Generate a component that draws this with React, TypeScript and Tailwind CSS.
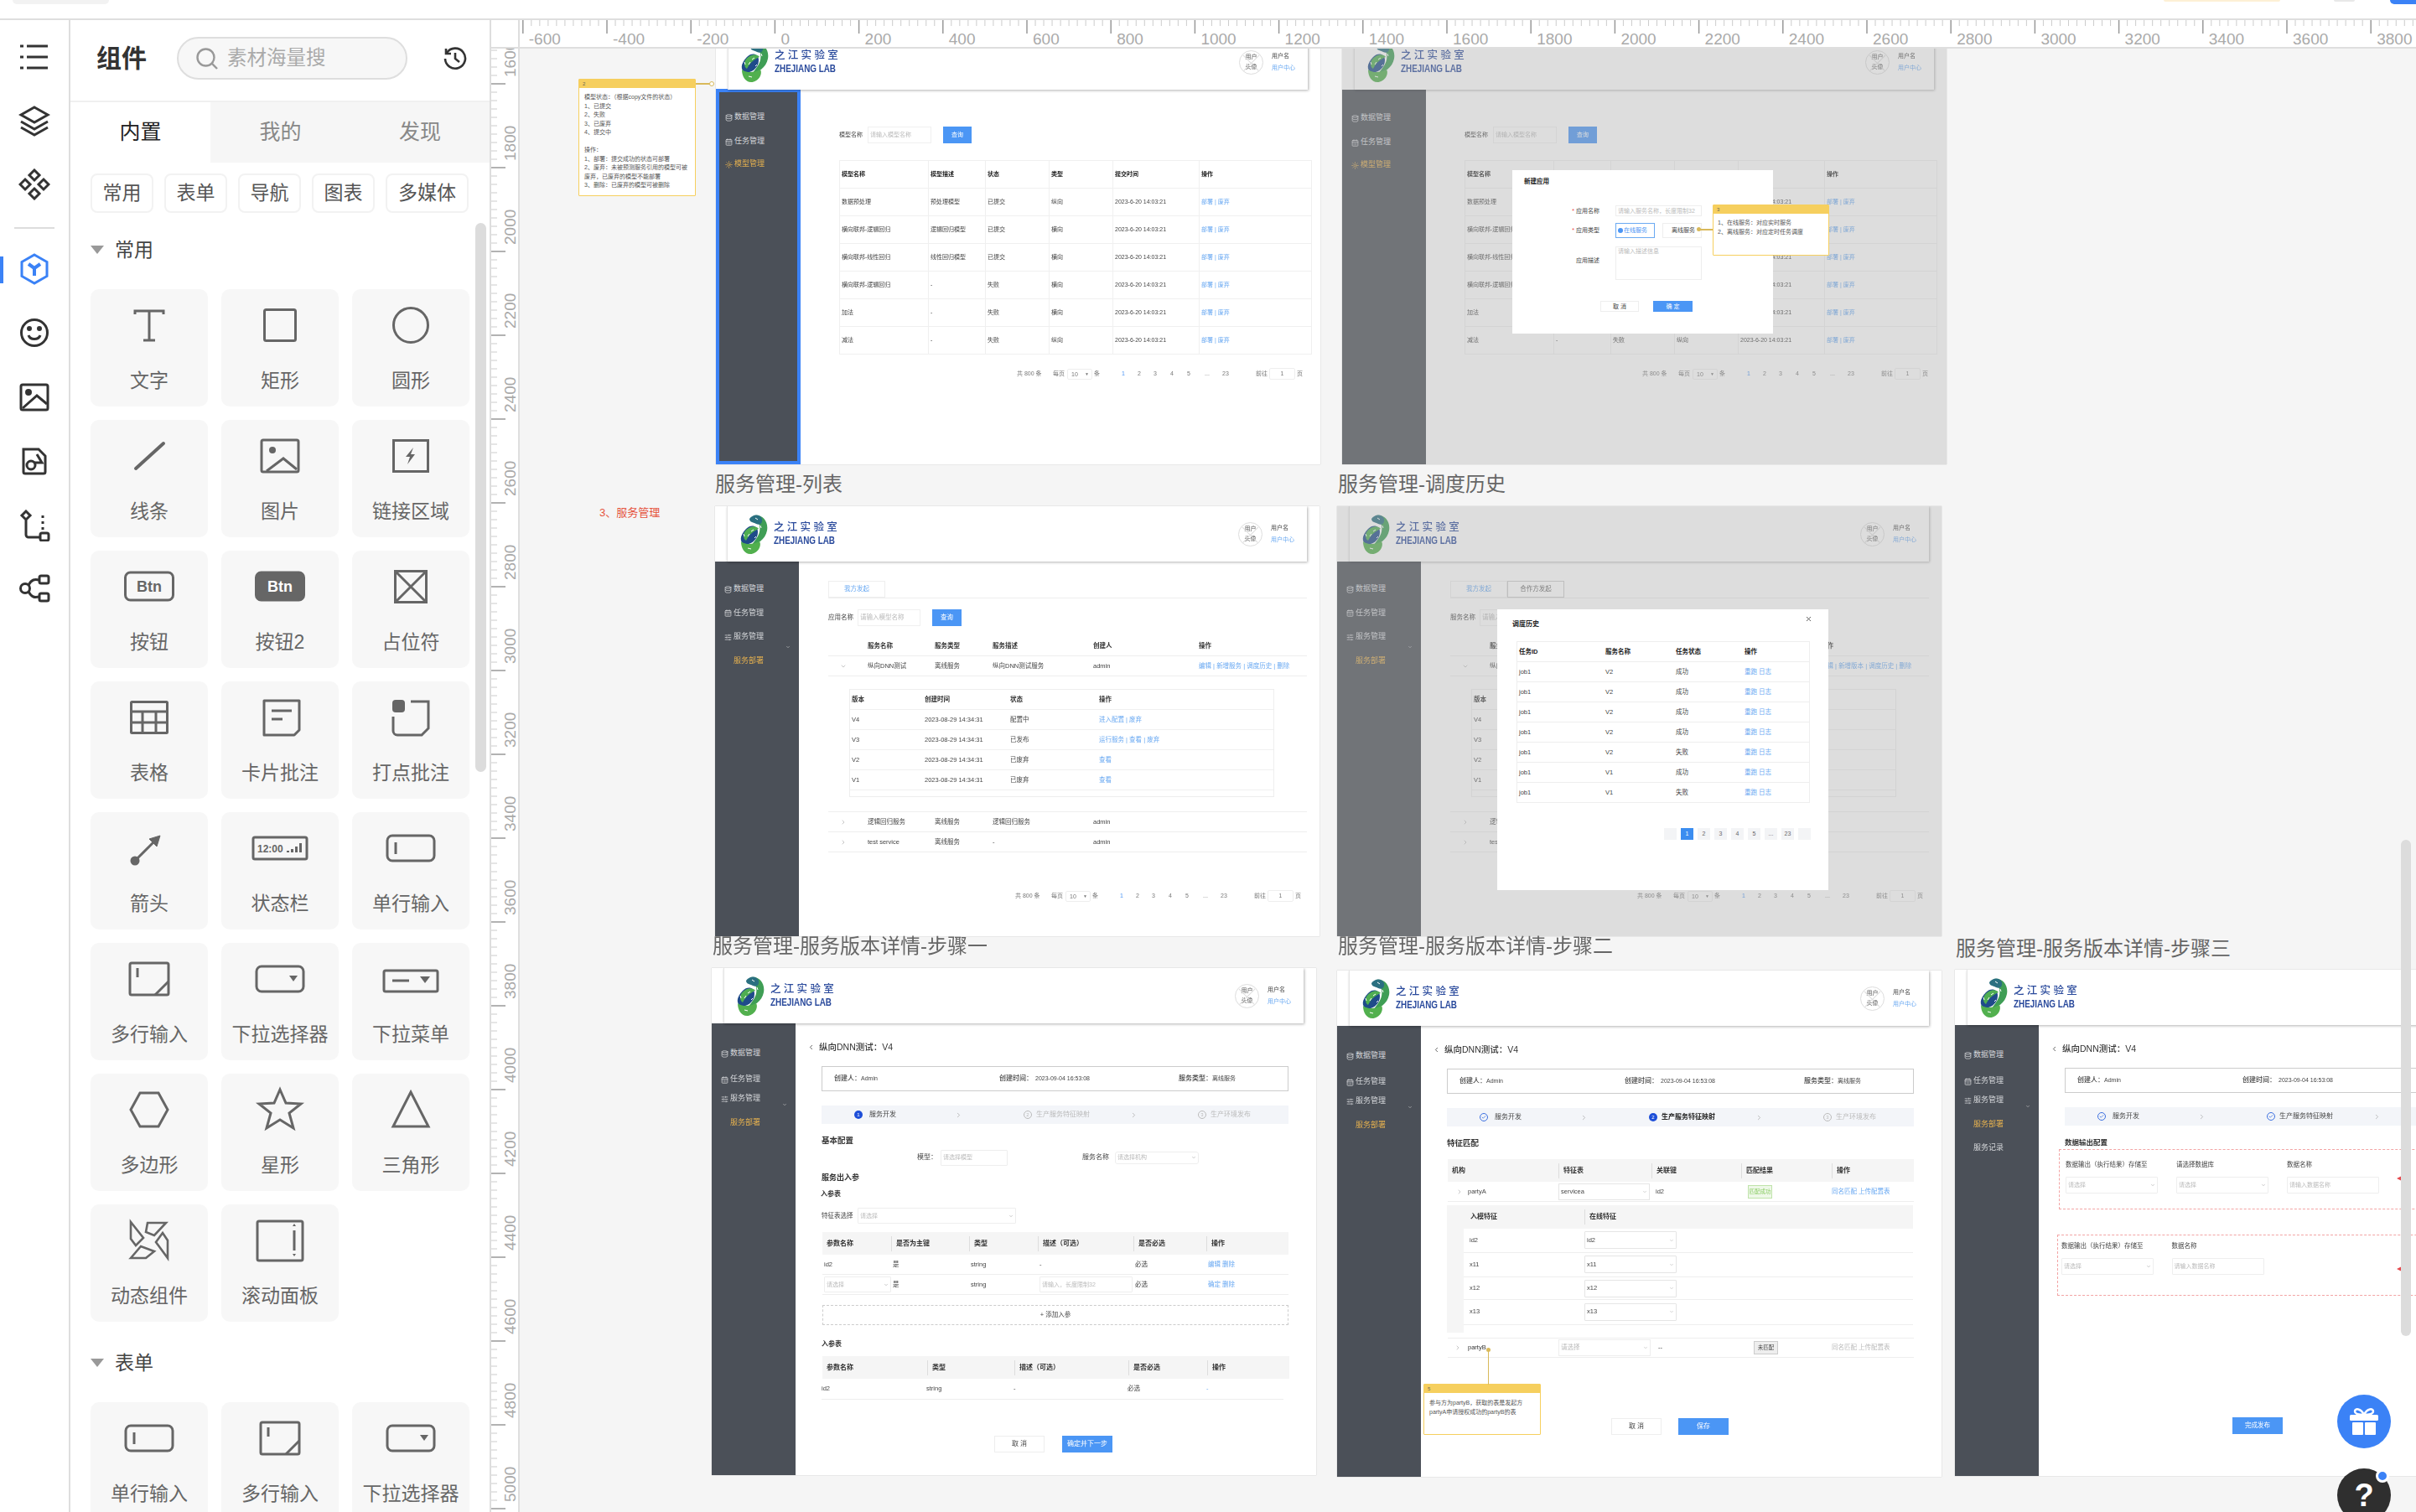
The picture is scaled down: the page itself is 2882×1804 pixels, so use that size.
import React from 'react';
import { Database, CalendarDays, SlidersHorizontal, Sun, ChevronDown, ChevronRight, ChevronLeft, Check, X } from 'lucide-react';

const S = { stroke: '#666', fill: 'none', strokeWidth: 3 } as const;

const btnIcon = (filled: boolean) => (
  <>
    <rect x="1.5" y="11" width="57" height="33" rx="6" stroke="#666" strokeWidth="3" fill={filled ? '#666' : 'none'} />
    <text x="30" y="33.5" textAnchor="middle" fontSize="18" fontWeight="700" fontFamily="Liberation Sans" fill={filled ? '#fff' : '#666'}>Btn</text>
  </>
);
const inputIcon = (
  <>
    <rect x="2" y="13" width="56" height="30" rx="6" {...S} />
    <path d="M12 21v14" {...S} />
  </>
);
const multiIcon = (
  <>
    <rect x="7" y="9" width="46" height="38" rx="2" {...S} />
    <path d="M16 15v11" {...S} />
    <path d="M37 47l16-16" {...S} />
  </>
);
const selectIcon = (
  <>
    <rect x="2" y="13" width="56" height="30" rx="6" {...S} />
    <path d="M41 24h10l-5 7z" fill="#666" />
  </>
);

const commonCards: [string, React.ReactNode][] = [
  ['文字', <path d="M13 15v-4h34v4M30 11v35M23 46h14" {...S} />],
  ['矩形', <rect x="11.5" y="9.5" width="37" height="37" rx="2" {...S} />],
  ['圆形', <circle cx="30" cy="28" r="20.5" {...S} />],
  ['线条', <path d="M14 43L47 13" {...S} strokeWidth="4" strokeLinecap="round" />],
  ['图片', <><rect x="8" y="9" width="44" height="38" rx="2" {...S} /><circle cx="21" cy="21" r="4" fill="#666" /><path d="M14 46l20-15 16 13" {...S} /></>],
  ['链接区域', <><rect x="9.5" y="9.5" width="41" height="37" {...S} /><path d="M33 18l-9 11h5l-3 9 9-12h-5z" fill="#666" /></>],
  ['按钮', btnIcon(false)],
  ['按钮2', btnIcon(true)],
  ['占位符', <><rect x="11.5" y="9.5" width="37" height="37" {...S} /><path d="M11.5 9.5l37 37M48.5 9.5l-37 37" {...S} /></>],
  ['表格', <><rect x="8.5" y="9.5" width="43" height="37" rx="1" {...S} /><path d="M8 21h44M8 34h44M22 21v25M38 21v25" {...S} /></>],
  ['卡片批注', <><path d="M11 8h42v35l-6 6H11z" {...S} strokeLinejoin="round" /><path d="M20 20h24M20 30h13" {...S} /></>],
  ['打点批注', <><rect x="8" y="7" width="15" height="15" rx="4" fill="#666" /><path d="M30 9h21v32l-8 8H14a5 5 0 0 1-5-5V27" {...S} /></>],
  ['箭头', <><circle cx="13" cy="43" r="5.5" fill="#666" /><path d="M13 43l25-25" {...S} /><path d="M43 13L30 17l9 9z" fill="#666" stroke="#666" /></>],
  ['状态栏', <><rect x="-2" y="15" width="64" height="26" rx="2" {...S} /><text x="3" y="33" fontSize="12" fontWeight="700" fontFamily="Liberation Sans" fill="#666">12:00</text><path d="M38 31h3v2h-3zM43 29h3v4h-3zM48 26h3v7h-3zM53 22h3v11h-3z" fill="#666" /></>],
  ['单行输入', inputIcon],
  ['多行输入', multiIcon],
  ['下拉选择器', selectIcon],
  ['下拉菜单', <><rect x="-2" y="18" width="64" height="25" rx="2" {...S} /><path d="M8 30h20" {...S} /><path d="M41 25h12l-6 8z" fill="#666" /></>],
  ['多边形', <path d="M19 8h22l11 20-11 20H19L8 28z" {...S} />],
  ['星形', <path d="M30 4l7 16 18 1-14 11 5 18-16-10-16 10 5-18L5 21l18-1z" {...S} />],
  ['三角形', <path d="M30 7l21 41H9z" {...S} />],
  ['动态组件', <><path d="M28 7h22L36 22l-10-4zM38 30l8-11 6 9v21zM8 49l12-14 16 6-10 8zM8 6l15 19-9 9-6-8z" {...S} strokeWidth="2.6" /></>],
  ['滚动面板', <><rect x="3" y="5" width="54" height="47" rx="2" {...S} /><path d="M47 16v24" {...S} /><path d="M45 11h4l-2-3zM45 44h4l-2 3z" fill="#666" /></>],
];

const formCards: [string, React.ReactNode][] = [
  ['单行输入', inputIcon],
  ['多行输入', multiIcon],
  ['下拉选择器', selectIcon],
];

function Card({ label, icon }: { label: string; icon: React.ReactNode }) {
  return (
    <div className="h-[140px] rounded-[10px] bg-[#f7f7f7] pt-[15px] flex flex-col items-center">
      <svg width="60" height="56" viewBox="0 0 60 56" className="overflow-visible">{icon}</svg>
      <div className="mt-[22px] text-[23px] leading-[32px] text-[#666] whitespace-nowrap">{label}</div>
    </div>
  );
}

function Section({ title, className }: { title: string; className: string }) {
  return (
    <div className={`flex items-center h-[32px] ${className}`}>
      <span className="w-0 h-0 border-x-[8px] border-x-transparent border-t-[10px] border-t-[#999]" />
      <span className="ml-[13px] text-[23px] text-[#444]">{title}</span>
    </div>
  );
}

function RailIcon({ children, className = '' }: { children: React.ReactNode; className?: string }) {
  return (
    <svg width="38" height="38" viewBox="0 0 38 38" fill="none" stroke="#333" strokeWidth="3" className={className}>{children}</svg>
  );
}

function Rail() {
  return (
    <div className="w-[84px] border-r-2 border-[#dedede] flex flex-col items-center pt-[25px] relative">
      <RailIcon><path d="M10 6h25M10 19h25M10 32h25" /><path d="M2 6h4M2 19h4M2 32h4" /></RailIcon>
      <RailIcon className="mt-[38px]"><path d="M19 3l16 9-16 9-16-9z" /><path d="M3 20l16 9 16-9M3 27l16 9 16-9" /></RailIcon>
      <RailIcon className="mt-[38px]"><path d="M19 2l6 6-6 6-6-6zM8 13l6 6-6 6-6-6zM30 13l6 6-6 6-6-6zM19 24l6 6-6 6-6-6z" /></RailIcon>
      <div className="w-[48px] h-[2px] bg-[#ddd] mt-[32px]" />
      <RailIcon className="mt-[29px]"><g stroke="#3b82f6"><path d="M19 2l15 8.5v17L19 36 4 27.5v-17z" /><path d="M12 13l7 5 7-5M19 18v9" strokeWidth="4" /></g></RailIcon>
      <RailIcon className="mt-[38px]"><circle cx="19" cy="19" r="15.5" /><path d="M12 22c2 6 12 6 14 0" /><circle cx="13" cy="14" r="1.5" fill="#333" /><circle cx="25" cy="14" r="1.5" fill="#333" /></RailIcon>
      <RailIcon className="mt-[39px]"><rect x="3" y="4" width="32" height="30" rx="2" /><circle cx="12" cy="13" r="2.5" fill="#333" /><path d="M5 32l17-15 12 10" /></RailIcon>
      <RailIcon className="mt-[38px]"><path d="M6 5h18l8 8v19a2 2 0 0 1-2 2H8a2 2 0 0 1-2-2z" /><circle cx="15" cy="24" r="5" /><path d="M22 11l6 10h-9" /></RailIcon>
      <RailIcon className="mt-[39px]"><path d="M9 2l5 5-5 5-5-5zM9 12v18a3 3 0 0 0 3 3h14M29 7v3M29 14v3M29 21v3" /><rect x="26" y="28" width="10" height="9" rx="2" /></RailIcon>
      <RailIcon className="mt-[37px]"><circle cx="8" cy="19" r="5.5" /><rect x="25" y="4" width="11" height="9" rx="2" /><rect x="25" y="25" width="11" height="9" rx="2" /><path d="M12 15c4-7 7-7 13-6M12 23c4 7 7 7 13 6" /></RailIcon>
      <div className="absolute left-0 top-[282px] w-[4px] h-[32px] bg-[#3b82f6]" />
    </div>
  );
}

function Panel() {
  return (
    <div className="w-[502px] border-r-2 border-[#dedede] relative overflow-hidden">
      <div className="h-[98px] border-b-2 border-[#f0f0f0] flex items-center pl-[31px] pb-[5px]">
        <span className="w-[65px] text-[30px] font-bold text-[#333] leading-none">组件</span>
        <div className="ml-[31px] w-[275px] h-[51px] rounded-full border-2 border-[#dedede] bg-[#f7f7f7] flex items-center pl-[21px]">
          <svg width="26" height="26" viewBox="0 0 26 26" fill="none" stroke="#999" strokeWidth="2.4"><circle cx="11.5" cy="11.5" r="10" /><path d="M19 19l6 6" /></svg>
          <span className="ml-[11px] text-[23.5px] text-[#aaa]">素材海量搜</span>
        </div>
        <svg width="28" height="28" viewBox="0 0 28 28" fill="none" stroke="#333" strokeWidth="2.6" className="ml-[43px]"><path d="M4 7a12 12 0 1 1-2 7" /><path d="M3 2v6h6" /><path d="M14 7v7l5 4" /></svg>
      </div>
      <div className="flex h-[72px] text-[25px]">
        <div className="w-[167px] flex items-center justify-center text-[#222]">内置</div>
        <div className="w-[167px] flex items-center justify-center bg-[#f6f6f6] text-[#888]">我的</div>
        <div className="w-[166px] flex items-center justify-center bg-[#f6f6f6] text-[#888]">发现</div>
      </div>
      <div className="flex gap-[13px] pl-[24px] mt-[13px]">
        {['常用', '表单', '导航', '图表', '多媒体'].map((c, i) => (
          <div key={c} className={`h-[47px] ${i === 4 ? 'w-[99px]' : 'w-[75px]'} rounded-[8px] border-2 border-[#f2f2f2] flex items-center justify-center text-[23px] text-[#555]`}>{c}</div>
        ))}
      </div>
      <div className="pl-[24px] w-[476px]">
        <Section title="常用" className="mt-[28px]" />
        <div className="grid grid-cols-[140px_140px_140px] gap-[16px] mt-[31px]">
          {commonCards.map(([l, ic]) => <Card key={l} label={l} icon={ic} />)}
        </div>
        <Section title="表单" className="mt-[33px]" />
        <div className="grid grid-cols-[140px_140px_140px] gap-[16px] mt-[31px]">
          {formCards.map(([l, ic]) => <Card key={l} label={l} icon={ic} />)}
        </div>
      </div>
      <div className="absolute left-[483px] top-[242px] w-[13px] h-[655px] rounded-full bg-[#dcdcdc]" />
    </div>
  );
}

function TopRuler() {
  const ticks = Array.from({ length: 226 }, (_, i) => i - 30);
  return (
    <div className="h-[34px] border-b-2 border-[#dedede] flex">
      <div className="w-[34px] border-r-2 border-[#dedede]" />
      <svg width="2262" height="32" fontFamily="Liberation Sans" fontSize="19" fill="#aaa">
        {ticks.map(i => {
          const x = 304.4 + i * 10.02;
          const major = i % 10 === 0;
          return (
            <g key={i}>
              <line x1={x} x2={x} y1="0" y2={major ? 16 : 7} stroke={major ? '#999' : '#ccc'} strokeWidth={major ? 1.5 : 1} />
              {major && <text x={x + 7} y="29" stroke="none">{i * 20}</text>}
            </g>
          );
        })}
      </svg>
    </div>
  );
}

function LeftRuler() {
  const ticks = Array.from({ length: 190 }, (_, i) => i);
  return (
    <div className="w-[34px] border-r-2 border-[#dedede] overflow-hidden">
      <svg width="32" height="1746" fontFamily="Liberation Sans" fontSize="19" fill="#aaa">
        {ticks.map(i => {
          const y = -58 + i * 10;
          const major = i % 10 === 0;
          return (
            <g key={i}>
              <line x1="0" x2={major ? 17 : 7} y1={y} y2={y} stroke={major ? '#999' : '#ccc'} strokeWidth={major ? 1.5 : 1} />
              {major && <text transform={`translate(29 ${y - 8}) rotate(-90)`} stroke="none">{1400 + i * 20}</text>}
            </g>
          );
        })}
      </svg>
    </div>
  );
}

function Logo() {
  return (
    <svg width="34" height="49" viewBox="0 0 34 49" className="shrink-0">
      <path d="M8 18C14 12 22 14 22 22C22 30 14 38 6 36C0 34 0 26 8 18Z" fill="#1f4b8a" />
      <path d="M18 2C27 0 35 9 33 20C31 31 21 36 14 38C20 30 26 24 24 14C23 9 20 6 14 7C14 4 16 3 18 2Z" fill="#3f9e55" />
      <path d="M12 6C16 0 25 0 27 6C28 12 24 14 20 12C16 10 12 10 12 6Z" fill="#2a6f80" />
      <path d="M6 22C12 14 20 14 23 18C18 20 12 24 8 32C5 30 4 26 6 22Z" fill="#4fae52" />
      <path d="M2 33C8 38 18 36 24 33C27 38 22 48 13 48C6 48 2 41 2 33Z" fill="#52b04e" />
      <path d="M19 5l3 2M25 14l1 3M14 21l3-2M10 27l2-3M18 29l2-2M10 41l4 1M5 24l1 3" stroke="#fff" strokeWidth="1" />
    </svg>
  );
}

function Header() {
  return (
    <div className="h-[66px] pl-[14px] pr-[15px] shrink-0 relative z-10">
      <div className="h-full border-l border-[#e5e5e5] shadow-[1px_1px_3px_rgba(0,0,0,0.3)] bg-white flex items-center pl-[14px] pr-[13px]">
        <Logo />
        <div className="ml-[7px] w-[76px]">
          <div className="text-[12.5px] leading-[15px] font-medium tracking-[3.3px] text-[#2a4a9c] whitespace-nowrap">之江实验室</div>
          <div className="text-[13px] leading-[15px] font-bold scale-x-[0.76] origin-left text-[#2a4a9c] whitespace-nowrap font-['Liberation_Sans']">ZHEJIANG LAB</div>
        </div>
        <div className="ml-auto w-[29px] h-[29px] rounded-full border border-[#ddd] relative flex flex-col items-center justify-center text-[7px] leading-[12px] text-[#555] overflow-hidden">
          <span>用户</span><span>头像</span>
          <div className="absolute left-0 right-0 top-[14px] h-px bg-[#ddd] rotate-45" />
          <div className="absolute left-0 right-0 top-[14px] h-px bg-[#ddd] -rotate-45" />
        </div>
        <div className="ml-[10px] w-[30px] text-[7px] leading-[14px]">
          <div className="text-[#444]">用户名</div>
          <div className="text-[#6aa9f2]">用户中心</div>
        </div>
      </div>
    </div>
  );
}

function SideItem({ icon, label, tone = 'plain', className = '' }: { icon?: React.ReactNode; label: string; tone?: 'plain' | 'active'; className?: string }) {
  return (
    <div className={`h-[16px] flex items-center pl-[11px] text-[9px] ${tone === 'active' ? 'text-[#e4b04f]' : 'text-[#d5d7da]'} ${className}`}>
      <span className="w-[11px] shrink-0">{icon}</span>
      <span>{label}</span>
    </div>
  );
}

const dataIcon = <Database size={9} />;
const taskIcon = <CalendarDays size={9} />;
const serviceIcon = <SlidersHorizontal size={9} />;

// 列表页的侧栏间距均匀，详情页的间距不一样
function ServiceSide({ record = false, even = false }: { record?: boolean; even?: boolean }) {
  return (
    <div className={`w-[100px] shrink-0 bg-[#4b5058] ${even ? 'pt-[25px]' : 'pt-[28px]'}`}>
      <SideItem icon={dataIcon} label="数据管理" />
      <SideItem icon={taskIcon} label="任务管理" className={even ? 'mt-[12.5px]' : 'mt-[15px]'} />
      <div className="relative">
        <SideItem icon={serviceIcon} label="服务管理" className={even ? 'mt-[12.5px]' : 'mt-[7px]'} />
        <ChevronDown size={6} className={`absolute left-[84px] ${even ? 'top-[17px]' : 'top-[12px]'} text-[#ddd]`} />
      </div>
      <SideItem label="服务部署" tone="active" className={even ? 'mt-[12.5px]' : 'mt-[13px]'} />
      {record && <SideItem label="服务记录" className="mt-[12px]" />}
    </div>
  );
}

function ListSide({ selected = false }: { selected?: boolean }) {
  const shift = selected ? '-ml-[4px]' : '';
  return (
    <div className={`${selected ? 'w-[101px] border-[4px] border-[#3b82f6] -mt-px pt-[22px]' : 'w-[100px] pt-[26px]'} shrink-0 bg-[#4b5058]`}>
      <SideItem icon={dataIcon} label="数据管理" className={shift} />
      <SideItem icon={taskIcon} label="任务管理" className={`mt-[13px] ${shift}`} />
      <SideItem icon={<Sun size={9} />} label="模型管理" tone="active" className={`mt-[11px] ${shift}`} />
    </div>
  );
}

function Pagination({ className }: { className: string }) {
  return (
    <div className={`flex items-center h-[14px] text-[7px] text-[#777] whitespace-nowrap ${className}`}>
      <span className="w-[43px]">共 800 条</span>
      <span className="w-[17px]">每页</span>
      <span className="w-[30px] h-[13px] border border-[#eee] rounded-[2px] pl-[4px] leading-[11px] flex justify-between pr-[3px]">10<span className="text-[5px]">▼</span></span>
      <span className="ml-[2px] w-[33px]">条</span>
      <span className="w-[19px] text-[#4b96f5]">1</span>
      <span className="w-[19px]">2</span>
      <span className="w-[20px]">3</span>
      <span className="w-[20px]">4</span>
      <span className="w-[21px]">5</span>
      <span className="w-[21px]">...</span>
      <span className="w-[40px]">23</span>
      <span className="w-[16px]">前往</span>
      <span className="w-[31px] h-[14px] border border-[#eee] rounded-[2px] text-center leading-[12px]">1</span>
      <span className="ml-[2px]">页</span>
    </div>
  );
}

const TIME = '2023-6-20 14:03:21';
const modelRows = [
  ['数据预处理', '预处理模型', '已提交', '纵向'],
  ['横向联邦-逻辑回归', '逻辑回归模型', '已提交', '横向'],
  ['横向联邦-线性回归', '线性回归模型', '已提交', '横向'],
  ['横向联邦-逻辑回归', '-', '失败', '横向'],
  ['加法', '-', '失败', '横向'],
  ['减法', '-', '失败', '纵向'],
];

function ModelList() {
  const cell = 'border-r border-b border-[#f0f0f0] pl-[2px] flex items-center';
  return (
    <div className="flex-1 pl-[46px] pr-[13px] pt-[44px] text-[7px] leading-[10px] text-[#444]">
      <div className="flex items-center h-[20px]">
        <span className="w-[34px]">模型名称</span>
        <div className="w-[76px] h-[20px] border border-[#f0f0f0] pl-[2px] leading-[18px] text-[#bbb]">请输入模型名称</div>
        <div className="ml-[14px] w-[34px] h-[20px] bg-[#4b96f5] text-white text-center leading-[20px]">查询</div>
      </div>
      <div className="mt-[20px] grid grid-cols-[106px_68px_76px_76px_103px_134px] auto-rows-[33px] border-t border-l border-[#f0f0f0]">
        {['模型名称', '模型描述', '状态', '类型', '提交时间', '操作'].map(h => (
          <div key={h} className={`${cell} font-bold text-[#222]`}>{h}</div>
        ))}
        {modelRows.map((r, i) => (
          <React.Fragment key={i}>
            {r.map((c, j) => <div key={j} className={cell}>{c}</div>)}
            <div className={cell}>{TIME}</div>
            <div className={`${cell} text-[#6aa9f2]`}>部署 | 废弃</div>
          </React.Fragment>
        ))}
      </div>
      <Pagination className="mt-[16px] ml-[212px]" />
    </div>
  );
}

function Frame({ className, children }: { className: string; children: React.ReactNode }) {
  return (
    <div className={`absolute w-[721px] bg-white flex flex-col overflow-hidden shadow-[0_0_1px_rgba(0,0,0,0.3)] blur-[0.35px] ${className}`}>
      <Header />
      <div className="flex flex-1 min-h-0">{children}</div>
    </div>
  );
}

const Dim = () => <div className="absolute inset-0 bg-[#aaaaaa]/40 z-20" />;

function NewAppModal() {
  const label = 'w-[104px] text-right';
  return (
    <div className="absolute left-[203px] top-[162px] w-[311px] h-[195px] bg-white z-30 pt-[9px] text-[7px] leading-[10px] text-[#444]">
      <div className="pl-[14px] h-[10px] font-bold text-[7.5px] text-[#222]">新建应用</div>
      <div className="flex items-center mt-[23px] h-[13px]">
        <span className={label}><span className="text-[#e44]">* </span>应用名称</span>
        <span className="ml-[19px] w-[103px] h-[13px] border border-[#eee] pl-[2px] leading-[11px] text-[#bbb] whitespace-nowrap overflow-hidden">请输入服务名称，长度限制32</span>
      </div>
      <div className="flex items-center mt-[8px] h-[18px]">
        <span className={label}><span className="text-[#e44]">* </span>应用类型</span>
        <span className="ml-[19px] w-[47px] h-[18px] border border-[#6aa9f2] text-[#4b96f5] flex items-center pl-[2px]"><span className="w-[6px] h-[6px] rounded-full bg-[#4b96f5] mr-[1px]" />在线服务</span>
        <span className="ml-[9px] w-[47px] h-[18px] border border-[#eee] flex items-center pl-[10px]">离线服务</span>
      </div>
      <div className="flex mt-[10px] h-[40px]">
        <span className={`${label} mt-[12px]`}>应用描述</span>
        <span className="ml-[19px] w-[103px] h-[40px] border border-[#eee] pl-[2px] text-[#bbb]">请输入描述信息</span>
      </div>
      <div className="flex mt-[25px] h-[13px] ml-[105px]">
        <span className="w-[46px] border border-[#eee] text-center leading-[11px]">取 消</span>
        <span className="ml-[17px] w-[47px] bg-[#4b96f5] text-white text-center leading-[13px]">确 定</span>
      </div>
    </div>
  );
}

function Note({ className, no, children }: { className: string; no: string; children: React.ReactNode }) {
  return (
    <div className={`absolute border border-[#f6cf5e] bg-white rounded-[1px] text-[7px] leading-[10.5px] text-[#555] z-30 ${className}`}>
      <div className="h-[10px] bg-[#f6cf5e] pl-[4px] text-[6px] leading-[10px] text-[#665]">{no}</div>
      {children}
    </div>
  );
}

const versionRows = [
  ['V4', '配置中', '进入配置 | 废弃'],
  ['V3', '已发布', '运行服务 | 查看 | 废弃'],
  ['V2', '已废弃', '查看'],
  ['V1', '已废弃', '查看'],
];
const serviceRows = [
  ['逻辑回归服务', '离线服务', '逻辑回归服务', 'admin'],
  ['test service', '离线服务', '-', 'admin'],
];

function ServiceList({ both = false }: { both?: boolean }) {
  const cols = 'grid grid-cols-[47px_80px_69px_120px_126px_129px] items-center';
  const sub = 'grid grid-cols-[87px_102px_106px_211px] items-center h-[24px] border-b border-[#f0f0f0] pl-[2px]';
  return (
    <div className="flex-1 pl-[35px] pr-[15px] pt-[23px] text-[7.5px] leading-[10px] text-[#444]">
      <div className="flex h-[21px] border-b border-[#eee]">
        <div className="w-[68px] h-[20px] border border-[#eee] text-center leading-[18px] text-[#6aa9f2]">我方发起</div>
        {both && <div className="w-[68px] h-[20px] border border-[#ccc] text-center leading-[18px] text-[#666]">合作方发起</div>}
      </div>
      <div className="flex items-center mt-[13px] h-[20px]">
        <span className="w-[35px]">{both ? '服务名称' : '应用名称'}</span>
        <div className="w-[75px] h-[20px] border border-[#f0f0f0] pl-[2px] leading-[18px] text-[#bbb]">请输入模型名称</div>
        <div className="ml-[14px] w-[35px] h-[20px] bg-[#4b96f5] text-white text-center leading-[20px]">查询</div>
      </div>
      <div className={`${cols} mt-[12px] h-[24px] border-b border-[#eee] font-bold text-[#333]`}>
        <span />
        <span>服务名称</span><span>服务类型</span><span>服务描述</span><span>创建人</span><span>操作</span>
      </div>
      <div className={`${cols} h-[24px] border-b border-[#eee]`}>
        <ChevronDown size={8} className="ml-[14px] text-[#aaa]" />
        <span>纵向DNN测试</span><span>离线服务</span><span>纵向DNN测试服务</span><span>admin</span>
        <span className="text-[#6aa9f2] whitespace-nowrap">编辑 | {both ? '新增版本' : '新增服务'} | 调度历史 | 删除</span>
      </div>
      <div className="mt-[15px] ml-[25px] w-[507px] h-[129px] border border-[#eee]">
        <div className={`${sub} font-bold text-[#333]`}><span>版本</span><span>创建时间</span><span>状态</span><span>操作</span></div>
        {versionRows.map(r => (
          <div key={r[0]} className={sub}>
            <span>{r[0]}</span><span>2023-08-29 14:34:31</span><span>{r[1]}</span><span className="text-[#6aa9f2]">{r[2]}</span>
          </div>
        ))}
      </div>
      <div className="mt-[17px] border-t border-[#eee]">
        {serviceRows.map(r => (
          <div key={r[0]} className={`${cols} h-[24px] border-b border-[#eee]`}>
            <ChevronRight size={8} className="ml-[14px] text-[#aaa]" />
            {r.map((c, j) => <span key={j}>{c}</span>)}
          </div>
        ))}
      </div>
      <Pagination className="mt-[45px] ml-[223px]" />
    </div>
  );
}

const jobRows = [
  ['V2', '成功'], ['V2', '成功'], ['V2', '成功'], ['V2', '成功'], ['V2', '失败'], ['V1', '成功'], ['V1', '失败'],
];

function HistoryModal() {
  const row = 'grid grid-cols-[103px_84px_82px_80px] h-[24px] items-center border-b border-[#eee] pl-[2px]';
  return (
    <div className="absolute left-[191px] top-[123px] w-[395px] h-[335px] bg-white z-30 text-[7.5px] leading-[10px] text-[#444]">
      <div className="absolute left-[367px] top-[7px]"><X size={9} className="text-[#333]" /></div>
      <div className="pl-[18px] pt-[13px] h-[38px] font-bold text-[#222] text-[8px]">调度历史</div>
      <div className="ml-[23px] w-[350px] border-t border-x border-[#eee]">
        <div className={`${row} font-bold text-[#222]`}><span>任务ID</span><span>服务名称</span><span>任务状态</span><span>操作</span></div>
        {jobRows.map((r, i) => (
          <div key={i} className={row}>
            <span>job1</span><span>{r[0]}</span><span>{r[1]}</span><span className="text-[#6aa9f2]">重跑 日志</span>
          </div>
        ))}
      </div>
      <div className="flex gap-[5px] ml-[199px] mt-[30px] text-[7px]">
        {['', '1', '2', '3', '4', '5', '...', '23', ''].map((p, i) => (
          <span key={i} className={`w-[15px] h-[14px] text-center leading-[14px] ${p === '1' ? 'bg-[#3b8df0] text-white' : 'bg-[#f3f4f6] text-[#666]'}`}>{p}</span>
        ))}
      </div>
    </div>
  );
}

function StepMark({ state, n }: { state: 'done' | 'now' | 'todo'; n: string }) {
  if (state === 'done') return <span className="w-[10px] h-[10px] rounded-full border border-[#3b6fe0] flex items-center justify-center text-[#3b6fe0]"><Check size={6} strokeWidth={3} /></span>;
  if (state === 'now') return <span className="w-[10px] h-[10px] rounded-full bg-[#1d4ed8] text-white flex items-center justify-center text-[6px]">{n}</span>;
  return <span className="w-[10px] h-[10px] rounded-full border border-[#bbb] text-[#bbb] flex items-center justify-center text-[6px]">{n}</span>;
}

function VersionTop({ step }: { step: 1 | 2 | 3 }) {
  const tone = (i: number) => (i === step ? (i === 2 ? 'text-[#222] font-bold' : 'text-[#444]') : i < step ? 'text-[#444]' : 'text-[#bbb]');
  const mark = (i: number) => (i < step ? 'done' : i === step ? 'now' : 'todo');
  return (
    <>
      <div className="flex items-center h-[14px] mt-[21px] -ml-[17px] text-[10.5px] text-[#333]">
        <ChevronLeft size={9} />
        <span className="ml-[5px] font-medium">纵向DNN测试：V4</span>
      </div>
      <div className="mt-[16px] h-[30px] w-[557px] border border-[#ccc] flex items-center text-[8px] text-[#444]">
        <span className="ml-[14px] w-[197px]"><b className="font-medium">创建人：</b><span className="text-[7px]">Admin</span></span>
        <span className="w-[214px]"><b className="font-medium">创建时间：</b><span className="ml-[3px] text-[7px]">2023-09-04 16:53:08</span></span>
        <span><b className="font-medium">服务类型：</b><span className="text-[7px]">离线服务</span></span>
      </div>
      <div className="mt-[17px] h-[22px] w-[557px] bg-[#f3f5f9] flex items-center text-[8px] whitespace-nowrap">
        <span className="ml-[39px]"><StepMark state={mark(1)} n="1" /></span>
        <span className={`ml-[8px] w-[102px] ${tone(1)}`}>服务开发</span>
        <ChevronRight size={9} className="text-[#aaa]" />
        <span className="ml-[73px]"><StepMark state={mark(2)} n="2" /></span>
        <span className={`ml-[5px] w-[112px] ${tone(2)}`}>生产服务特征映射</span>
        <ChevronRight size={9} className="text-[#aaa]" />
        <span className="ml-[72px]"><StepMark state={mark(3)} n="3" /></span>
        <span className={`ml-[5px] ${tone(3)}`}>生产环境发布</span>
      </div>
    </>
  );
}

function Field({ className, children, arrow = false }: { className: string; children: React.ReactNode; arrow?: boolean }) {
  return (
    <div className={`border border-[#eee] rounded-[1px] flex items-center justify-between pl-[2px] pr-[2px] text-[#bbb] text-[7px] ${className}`}>
      <span>{children}</span>
      {arrow && <ChevronDown size={6} className="text-[#999]" />}
    </div>
  );
}

function TableHead({ className, labels }: { className: string; labels: string[] }) {
  return (
    <div className={`grid h-[27px] bg-[#f5f5f5] items-center font-bold text-[8px] text-[#333] ${className}`}>
      {labels.map((l, i) => (
        <span key={l} className={`h-[18px] leading-[18px] pl-[5px] ${i > 0 ? 'border-l border-[#ddd]' : ''}`}>{l}</span>
      ))}
    </div>
  );
}

function StepOne() {
  const row1 = 'grid grid-cols-[82px_93px_82px_114px_87px_98px]';
  const row2 = 'grid grid-cols-[125px_104px_136px_94px_98px]';
  return (
    <div className="flex-1 pl-[31px] text-[7.5px] leading-[10px] text-[#444]">
      <VersionTop step={1} />
      <div className="mt-[14px] h-[12px] font-bold text-[9.5px] leading-[12px] text-[#333]">基本配置</div>
      <div className="flex items-center h-[20px] mt-[4px]">
        <span className="ml-[114px] w-[28px] text-[8px]">模型：</span>
        <Field className="w-[80px] h-[19px]">请选择模型</Field>
        <span className="ml-[89px] w-[39px] text-[8px]">服务名称</span>
        <Field arrow className="w-[100px] h-[15px] rounded-[3px]">请选择机构</Field>
      </div>
      <div className="mt-[8px] h-[12px] font-semibold text-[9px] leading-[12px] text-[#333]">服务出入参</div>
      <div className="mt-[9px] h-[10px] font-semibold text-[8px] -ml-[1px] text-[#333]">入参表</div>
      <div className="flex items-center mt-[11px] h-[19px]">
        <span className="w-[43px]">特征表选择</span>
        <Field arrow className="w-[189px] h-[19px]">请选择</Field>
      </div>
      <div className="ml-[1px] w-[556px]">
        <TableHead className={`${row1} mt-[10px]`} labels={['参数名称', '是否为主键', '类型', '描述（可选）', '是否必选', '操作']} />
        <div className={`${row1} h-[24px] items-center border-b border-[#eee] pl-[2px]`}>
          <span>id2</span><span>是</span><span>string</span><span>-</span><span>必选</span><span className="text-[#6aa9f2]">编辑 删除</span>
        </div>
        <div className={`${row1} h-[24px] items-center border-b border-[#eee] pl-[2px]`}>
          <Field arrow className="w-[80px] h-[19px]">请选择</Field><span>是</span><span>string</span>
          <Field className="w-[111px] h-[19px]">请输入，长度限制32</Field><span>必选</span><span className="text-[#6aa9f2]">确定 删除</span>
        </div>
        <div className="mt-[12px] h-[24px] border border-dashed border-[#ccc] text-center leading-[22px]">+ 添加入参</div>
      </div>
      <div className="mt-[18px] h-[10px] font-semibold text-[8px] text-[#333]">入参表</div>
      <TableHead className={`${row2} mt-[9px] ml-[1px] w-[557px]`} labels={['参数名称', '类型', '描述（可选）', '是否必选', '操作']} />
      <div className={`${row2} w-[551px] h-[25px] items-center border-b border-[#eee]`}>
        <span>id2</span><span>string</span><span>-</span><span>必选</span><span className="text-[#6aa9f2]">-</span>
      </div>
      <div className="flex mt-[43px] ml-[206px] h-[20px] text-[8px]">
        <span className="w-[60px] border border-[#eee] text-center leading-[18px]">取 消</span>
        <span className="ml-[21px] w-[60px] bg-[#4b96f5] text-white text-center leading-[20px]">确定并下一步</span>
      </div>
    </div>
  );
}

function SubRow({ name, field, className }: { name: string; field: string; className: string }) {
  return (
    <div className={`ml-[20px] bg-white border-b border-[#eee] flex items-center ${className}`}>
      <span className="pl-[7px] w-[144px]">{name}</span>
      <div className="w-[110px] h-[21px] border border-[#e5e5e5] rounded-[1px] flex items-center justify-between px-[2px]">
        {field}<ChevronDown size={6} className="text-[#aaa]" />
      </div>
    </div>
  );
}

function StepTwo() {
  const cols = 'grid grid-cols-[132px_111px_107px_108px_98px]';
  return (
    <div className="flex-1 pl-[31px] text-[7.5px] leading-[10px] text-[#444]">
      <VersionTop step={2} />
      <div className="mt-[14px] h-[12px] font-bold text-[9.5px] leading-[12px] text-[#333]">特征匹配</div>
      <TableHead className={`${cols} mt-[13px] ml-[1px] w-[556px]`} labels={['机构', '特征表', '关联键', '匹配结果', '操作']} />
      <div className={`${cols} ml-[1px] w-[556px] h-[24px] items-center border-b border-[#eee]`}>
        <span className="flex items-center pl-[10px]"><ChevronRight size={8} className="text-[#aaa]" /><span className="ml-[6px]">partyA</span></span>
        <div className="w-[109px] h-[20px] border border-[#e5e5e5] flex items-center justify-between px-[2px]">servicea<ChevronDown size={6} className="text-[#aaa]" /></div>
        <span className="pl-[5px]">id2</span>
        <span className="ml-[8px] w-[29px] h-[16px] bg-[#eef8e8] border border-[#bfe3aa] text-[#8fce6a] text-center leading-[14px] text-[6.5px]">匹配成功</span>
        <span className="text-[#6aa9f2] whitespace-nowrap">同名匹配 上传配置表</span>
      </div>
      <div className="mt-[4px] w-[556px] h-[152px] bg-[#f5f5f5]">
        <div className="h-[28px] flex items-center font-bold text-[8px] text-[#333]">
          <span className="pl-[28px] w-[164px]">入模特征</span>
          <span className="border-l border-[#ddd] pl-[5px] h-[18px] leading-[18px]">在线特征</span>
        </div>
        <SubRow name="id2" field="id2" className="h-[28.5px]" />
        <SubRow name="x11" field="x11" className="h-[29.5px]" />
        <SubRow name="x12" field="x12" className="h-[27px]" />
        <SubRow name="x13" field="x13" className="h-[29.5px]" />
        <div className="ml-[20px] bg-white h-[9.5px]" />
      </div>
      <div className={`${cols} mt-[5.5px] ml-[1px] w-[556px] h-[24px] items-center border-y border-[#eee]`}>
        <span className="flex items-center pl-[8px]"><ChevronRight size={8} className="text-[#aaa]" /><span className="ml-[8px] text-[#333]">partyB</span></span>
        <div className="w-[110px] h-[20px] border border-[#eee] flex items-center justify-between px-[2px] text-[#bbb]">请选择<ChevronDown size={6} className="text-[#aaa]" /></div>
        <span className="pl-[8px]">--</span>
        <span className="ml-[15px] w-[29px] h-[16px] bg-[#eee] border border-[#ccc] text-center leading-[14px] text-[6.5px]">未匹配</span>
        <span className="text-[#bbb] whitespace-nowrap">同名匹配 上传配置表</span>
      </div>
      <div className="flex mt-[72px] ml-[196px] h-[20px] text-[8px]">
        <span className="w-[60px] border border-[#eee] text-center leading-[18px]">取 消</span>
        <span className="ml-[20px] w-[60px] bg-[#4b96f5] text-white text-center leading-[20px]">保存</span>
      </div>
    </div>
  );
}

function FieldCol({ label, hint, arrow, className }: { label: string; hint: string; arrow?: boolean; className: string }) {
  return (
    <div className={className}>
      <div className="h-[10px] whitespace-nowrap">{label}</div>
      <Field arrow={arrow} className="mt-[9px] w-[110px] h-[20px]">{hint}</Field>
    </div>
  );
}

function StepThree() {
  return (
    <div className="flex-1 pl-[31px] text-[7.5px] leading-[10px] text-[#444]">
      <VersionTop step={3} />
      <div className="mt-[14px] h-[12px] font-bold text-[8.5px] leading-[12px] text-[#333]">数据输出配置</div>
      <div className="mt-[2px] -ml-[7px] w-[640px] h-[72px] border border-dashed border-[#f3a4a4] flex pt-[13px] pl-[7px]">
        <FieldCol arrow label="数据输出（执行结果）存储至" hint="请选择" className="w-[132px]" />
        <FieldCol arrow label="请选择数据库" hint="请选择" className="w-[132px]" />
        <FieldCol label="数据名称" hint="请输入数据名称" className="w-[132px]" />
      </div>
      <div className="mt-[30px] -ml-[9px] w-[640px] h-[73px] border border-dashed border-[#f3a4a4] flex pt-[8px] pl-[4px]">
        <FieldCol arrow label="数据输出（执行结果）存储至" hint="请选择" className="w-[131.5px]" />
        <FieldCol label="数据名称" hint="请输入数据名称" className="w-[132px]" />
      </div>
      <div className="mt-[145px] ml-[200px] w-[60px] h-[20px] bg-[#4b96f5] text-white text-center leading-[20px]">完成发布</div>
    </div>
  );
}

function Title({ className, children }: { className: string; children: string }) {
  return <div className={`absolute text-[24px] leading-[30px] text-[#666] whitespace-nowrap ${className}`}>{children}</div>;
}

function Canvas() {
  return (
    <div className="relative flex-1 bg-[#f5f5f5] overflow-hidden">
      <Note no="2" className="left-[70px] top-[36px] w-[140px] h-[140px]">
        <div className="px-[6px] pt-[6px] text-[7px] whitespace-pre-line">
          {'模型状态：（根据copy文件的状态）\n1、已提交\n2、失败\n3、已废弃\n4、提交中\n\n操作：\n1、部署：提交成功的状态可部署\n2、废弃：未被预测服务引用的模型可被废弃，已废弃的模型不能部署\n3、删除：已废弃的模型可被删除'}
        </div>
      </Note>
      <div className="absolute left-[210px] top-[41px] w-[19px] h-[1.5px] bg-[#d9b95a]" />
      <div className="absolute left-[226px] top-[39px] w-[6px] h-[6px] rounded-full border border-[#d9b95a] bg-white" />
      <div className="absolute left-[95px] top-[545px] text-[13px] leading-[18px] text-[#e5533d]">3、服务管理</div>

      <Frame className="left-[234px] top-[-17px] h-[513px]">
        <ListSide selected />
        <ModelList />
      </Frame>
      <Title className="left-[233px] top-[505px]">服务管理-列表</Title>

      <Frame className="left-[981px] top-[-17px] h-[513px] w-[721px]">
        <ListSide />
        <ModelList />
        <Dim />
        <NewAppModal />
        <Note no="3" className="left-[442px] top-[203px] w-[139px] h-[61px]">
          <div className="pl-[5px] pt-[6px]">1、在线服务：对应实时服务<br />2、离线服务：对应定时任务调度</div>
        </Note>
        <div className="absolute left-[425px] top-[232px] w-[17px] h-[1.5px] bg-[#d9b95a] z-30" />
        <div className="absolute left-[423px] top-[230px] w-[5px] h-[5px] rounded-full bg-[#d9b95a] z-30" />
      </Frame>
      <Title className="left-[976px] top-[505px]">服务管理-调度历史</Title>

      <Frame className="left-[233px] top-[546px] h-[513px]">
        <ServiceSide even />
        <ServiceList />
      </Frame>
      <Title className="left-[230px] top-[1056px]">服务管理-服务版本详情-步骤一</Title>

      <Frame className="left-[975px] top-[546px] h-[513px]">
        <ServiceSide even />
        <ServiceList both />
        <Dim />
        <HistoryModal />
      </Frame>
      <Title className="left-[976px] top-[1056px]">服务管理-服务版本详情-步骤二</Title>
      <Title className="left-[1713px] top-[1059px]">服务管理-服务版本详情-步骤三</Title>

      <Frame className="left-[229px] top-[1097px] h-[605px]">
        <ServiceSide />
        <StepOne />
      </Frame>

      <Frame className="left-[975px] top-[1100px] h-[604px]">
        <ServiceSide />
        <StepTwo />
        <Note no="5" className="left-[103px] top-[493px] w-[140px] h-[61px]">
          <div className="pl-[6px] pt-[6px] leading-[11px]">参与方为partyB，获取的表是发起方<br />partyA申请授权成功的partyB的表</div>
        </Note>
        <div className="absolute left-[180px] top-[453px] w-[1px] h-[41px] bg-[#d9b95a] z-30" />
        <div className="absolute left-[178px] top-[450px] w-[5px] h-[5px] rounded-full bg-[#d9b95a] z-30" />
      </Frame>

      <Frame className="left-[1712px] top-[1099px] h-[604px]">
        <ServiceSide record />
        <StepThree />
        <div className="absolute left-[527px] top-[246px] w-0 h-0 border-y-[3px] border-y-transparent border-r-[6px] border-r-[#e5484d] z-30" />
        <div className="absolute left-[527px] top-[354px] w-0 h-0 border-y-[3px] border-y-transparent border-r-[6px] border-r-[#e5484d] z-30" />
      </Frame>

      <div className="absolute left-[2244px] top-[944px] w-[12px] h-[592px] rounded-full bg-[#dcdcdc]" />
      <div className="absolute left-[2168px] top-[1606px] w-[64px] h-[64px] rounded-full bg-[#3b82f6] flex items-center justify-center">
        <svg width="34" height="32" viewBox="0 0 34 32" fill="#fff">
          <rect x="0" y="8" width="34" height="7" rx="1.5" />
          <rect x="3" y="17" width="13" height="15" rx="1" />
          <rect x="18" y="17" width="13" height="15" rx="1" />
          <path d="M17 8C13 0 6 0 6 4c0 3 5 4 11 4zM17 8c4-8 11-8 11-4 0 3-5 4-11 4z" fill="none" stroke="#fff" strokeWidth="2.5" />
        </svg>
      </div>
      <div className="absolute left-[2168px] top-[1694px] w-[64px] h-[64px] rounded-full bg-[#2f2f2f] flex items-center justify-center text-white text-[38px] font-bold font-['Liberation_Sans']">?</div>
      <div className="absolute left-[2214px] top-[1695px] w-[16px] h-[16px] rounded-full bg-[#3b82f6] border-[3px] border-white" />
    </div>
  );
}

export default function App() {
  return (
    <div className="w-[2882px] h-[1804px] flex flex-col overflow-hidden bg-white font-['Liberation_Sans','Noto_Sans_CJK_SC',sans-serif]">
      <div className="h-[24px] border-b-2 border-[#dedede] flex items-start shrink-0">
        <div className="ml-[15px] w-[115px] h-[5px] rounded-b-[8px] bg-[#f2f2f2]" />
        <div className="ml-[2451px] w-[139px] h-[2px] rounded-b bg-[#fdf0d5]" />
        <div className="ml-[64px] w-[25px] h-[2px] rounded-b bg-[#e8e8e8]" />
        <div className="ml-[42px] w-[31px] h-[5px] rounded-bl-full bg-[#3b82f6]" />
      </div>
      <div className="flex flex-1 min-h-0">
        <Rail />
        <Panel />
        <div className="flex-1 flex flex-col min-w-0">
          <TopRuler />
          <div className="flex flex-1 min-h-0">
            <LeftRuler />
            <Canvas />
          </div>
        </div>
      </div>
    </div>
  );
}
